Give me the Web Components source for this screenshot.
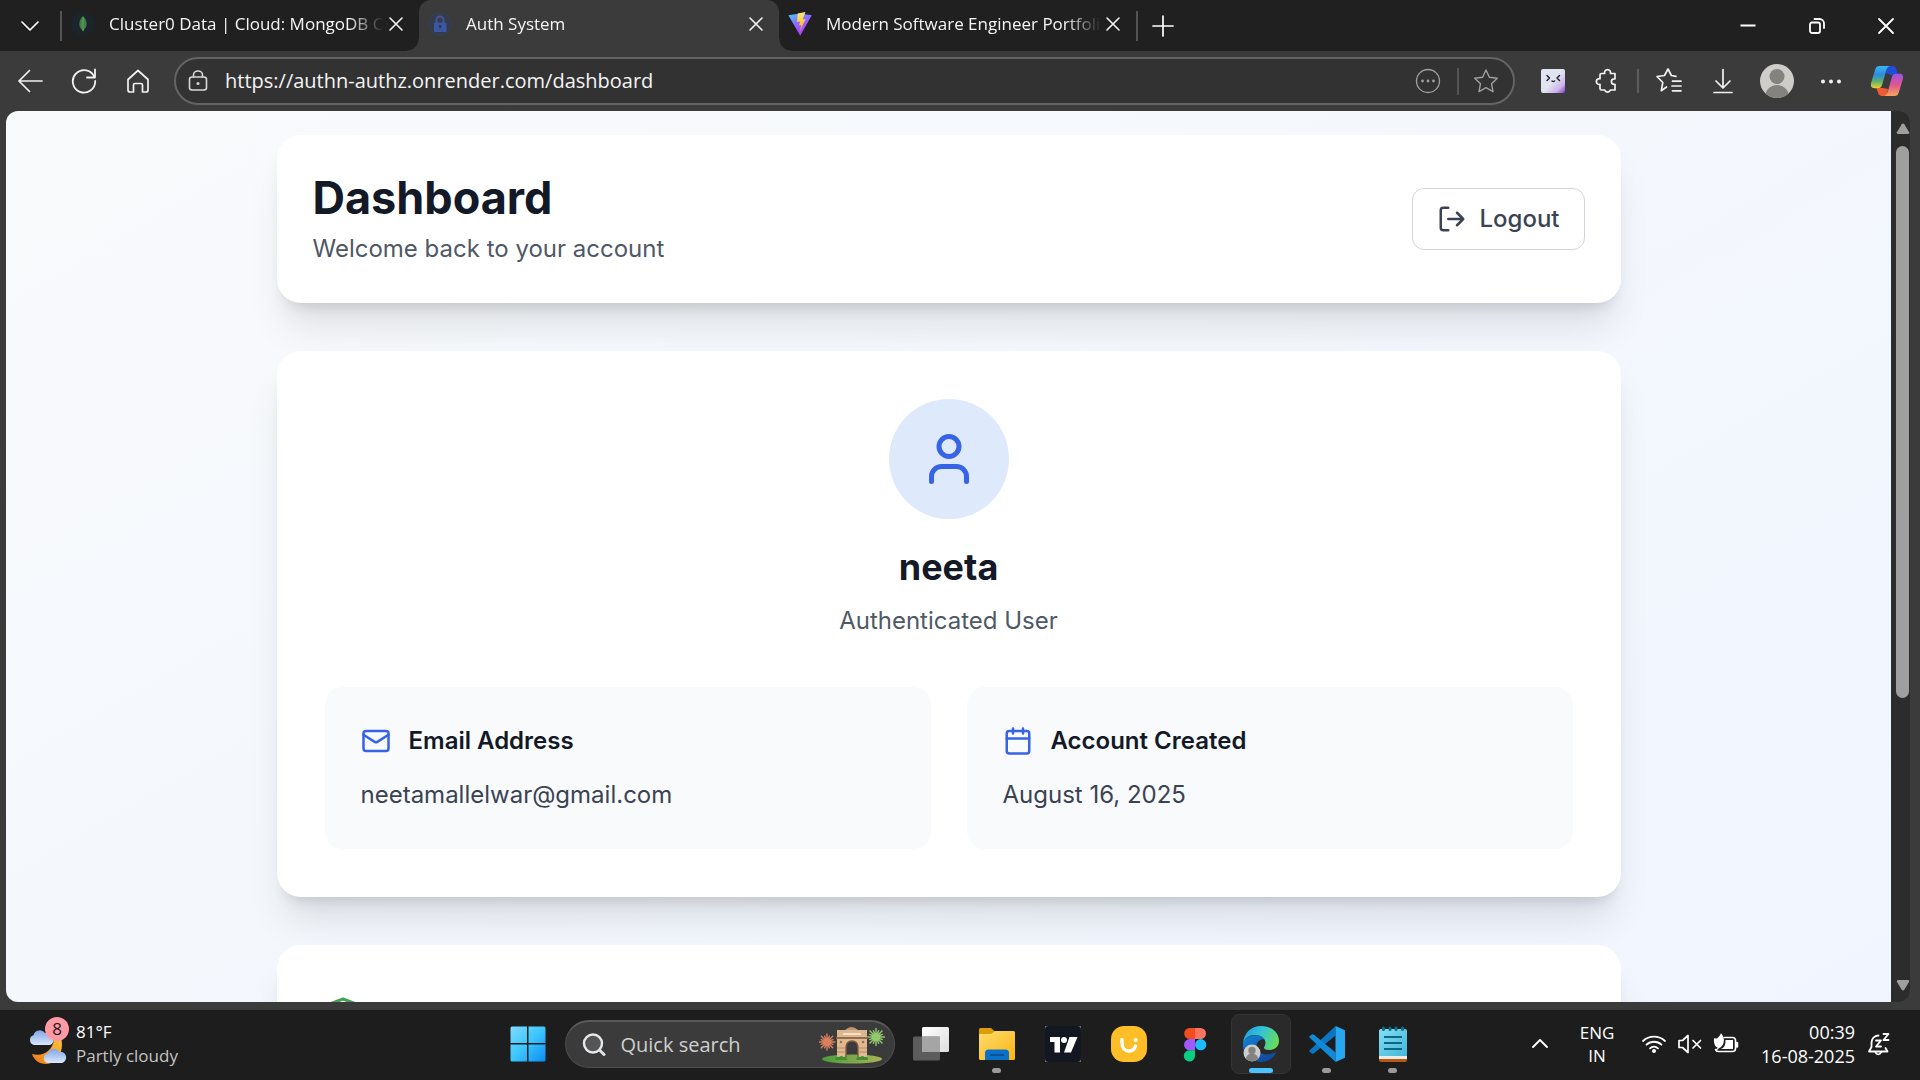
<!DOCTYPE html>
<html lang="en">
<head>
<meta charset="utf-8">
<title>Auth System</title>
<style>
html,body{margin:0;height:100%;overflow:hidden;background:#1d1d1d}
</style>
</head>
<body>
<desktop-shell></desktop-shell>
<script>
const UI_FONT = '"Open Sans","Noto Sans",sans-serif';
const define = (name, html, setup) => {
  const template = document.createElement('template');
  template.innerHTML = html;
  customElements.define(name, class extends HTMLElement {
    constructor() {
      super();
      this.attachShadow({ mode: 'open' }).append(template.content.cloneNode(true));
    }
    connectedCallback() { if (setup) setup(this, this.shadowRoot); }
  });
};

const line = 'fill="none" stroke="currentColor" stroke-linecap="round" stroke-linejoin="round"';
const burst = (cx, cy, r, color) => {
  let d = '';
  for (let i = 0; i < 16; i++) {
    const a = i * Math.PI / 8, k = i % 2 ? r * 0.8 : r;
    d += `M${cx} ${cy}L${(cx + Math.cos(a) * k).toFixed(1)} ${(cy + Math.sin(a) * k).toFixed(1)}`;
  }
  return `<path d="${d}" stroke="${color}" stroke-width="1.4" stroke-linecap="round"/><circle cx="${cx}" cy="${cy}" r="${r * 0.5}" fill="${color}" opacity=".75"/>`;
};

/* name: [width, height, markup] */
const ICONS = {
  chevron: [20, 20, `<path d="M2 6l8 8 8-8" ${line} stroke-width="1.7"/>`],
  chevronUp: [18, 18, `<path d="M2 12l7-7 7 7" ${line} stroke-width="1.9"/>`],
  leaf: [24, 24, `<circle cx="12" cy="12" r="12" fill="#1b242a"/><path d="M12 4c3 3 4 6 3.600 9-.3 2.500-1.600 4-3 5l-.6 2-.6-2c-1.400-1-2.800-2.500-3-5C8 10 9 7 12 4z" fill="#3f8145"/><path d="M12 5v14" stroke="#6aa164" stroke-width="1"/>`],
  padlock: [24, 24, `<circle cx="12" cy="12" r="11" fill="#343c4b" stroke="#33415c"/><path d="M8.500 11V8a3.500 3.500 0 0 1 7 0v3" fill="none" stroke="#3e5695" stroke-width="2"/><rect x="6" y="10.500" width="12.500" height="9.500" rx="1" fill="#3c569f"/><path d="M12.200 13v3" stroke="#28345a" stroke-width="2"/>`],
  vite: [24, 24, `<defs><linearGradient id="v" x1="0" y1="0" x2=".6" y2="1"><stop stop-color="#41d1ff"/><stop offset=".5" stop-color="#8c6bff"/><stop offset="1" stop-color="#bd34fe"/></linearGradient><linearGradient id="w" x1="0" y1="0" x2="0" y2="1"><stop stop-color="#ffea83"/><stop offset="1" stop-color="#ffa800"/></linearGradient></defs><path d="M.4 3.200L12 1.500l11.800 1.700L12.200 23.800z" fill="url(#v)"/><path d="M17.500 0L9.800 1.400 9 10l3-.6-.9 4 2.200-.5-1.600 6.900L17.500 7l-3 .5L17.500 0z" fill="url(#w)"/>`],
  close: [16, 16, `<path d="M2 2l12 12M14 2L2 14" ${line} stroke-width="1.600"/>`],
  plus: [22, 22, `<path d="M11 1v20M1 11h20" ${line} stroke-width="1.700"/>`],
  minimize: [18, 18, `<path d="M1.500 8.500h15" stroke="currentColor" stroke-width="2"/>`],
  restore: [18, 18, `<rect x="2" y="5.500" width="10" height="10.500" rx="2" ${line} stroke-width="1.800"/><path d="M6.500 2h5a4.500 4.500 0 0 1 4.500 4.500V11" ${line} stroke-width="1.800"/>`],
  closeWindow: [18, 18, `<path d="M2 2l14 14M16 2L2 16" ${line} stroke-width="1.800"/>`],
  back: [26, 26, `<path d="M25 13H2M12.500 2.500L2 13l10.500 10.500" ${line} stroke-width="1.700"/>`],
  reload: [28, 28, `<path d="M24.500 10.500A11.200 11.200 0 1 0 25.200 14M25 2.500v8h-8" ${line} stroke-width="1.800"/>`],
  home: [26, 26, `<path d="M3 11.500L13 2.500l10 9v10.500a2 2 0 0 1-2 2h-3.500v-7a1.500 1.500 0 0 0-1.500-1.500h-6a1.500 1.500 0 0 0-1.500 1.500v7H5a2 2 0 0 1-2-2z" ${line} stroke-width="1.700"/>`],
  siteLock: [20, 22, `<rect x="1.500" y="7" width="17" height="13" rx="2.500" ${line} stroke-width="1.600"/><path d="M5.500 7V5a4.500 4 0 0 1 9 0v2" ${line} stroke-width="1.600"/><circle cx="10" cy="13.500" r="1.500" fill="currentColor"/>`],
  moreCircle: [26, 26, `<circle cx="13" cy="13" r="11.500" ${line} stroke-width="1.300"/><g fill="currentColor"><circle cx="7.500" cy="13" r="1.400"/><circle cx="13" cy="13" r="1.400"/><circle cx="18.500" cy="13" r="1.400"/></g>`],
  star: [26, 26, `<path d="M13 2l3.400 7.200 7.900 1-5.800 5.500 1.500 7.900-7-3.900-7 3.900 1.500-7.900L1.700 10.200l7.900-1z" ${line} stroke-width="1.400"/>`],
  extension: [24, 24, `<defs><linearGradient id="e" x1=".3" y1=".3" x2="1" y2="1"><stop offset=".3" stop-color="#e2e4f0"/><stop offset=".7" stop-color="#cdb4ea"/><stop offset="1" stop-color="#8434d0"/></linearGradient></defs><rect width="24" height="24" rx="2" fill="url(#e)"/><path d="M6 6.500l2.500 2.500L6 11.500M18.500 6.500L16 9l2.500 2.500M11 12q1.200 1 2.600 0" ${line} style="color:#20243a" stroke-width="1.500"/>`],
  puzzle: [26, 26, `<path d="M7.500 5.500h3.200a3 3 0 1 1 5.700 0H21v5.300h-.8a2.800 2.800 0 1 0 0 5.600H21V22h-4.600a3 3 0 0 1-5.700 0H7.500a1.500 1.500 0 0 1-1.500-1.500v-4.100a2.900 2.900 0 1 1 0-5.600V7a1.500 1.500 0 0 1 1.500-1.500z" ${line} stroke-width="1.700"/>`],
  favorites: [28, 28, `<path d="M11.500 21L6.300 24.700 7.800 16.500 2 10.500l7.500-1L13 3l3.400 6.500 4.600.8M17.500 15.200h8.500M17 20h9M17.500 24.800h8.500" ${line} stroke-width="1.700" transform="translate(0 -1)"/>`],
  download: [22, 26, `<path d="M11 1.500v18M4 13l7 7 7-7M2 24.500h18" ${line} stroke-width="1.700"/>`],
  person: [34, 34, `<defs><clipPath id="p"><circle cx="17" cy="17" r="17"/></clipPath></defs><g clip-path="url(#p)"><rect width="34" height="34" fill="#cfcdc9"/><circle cx="17" cy="12.500" r="7.500" fill="#858380"/><circle cx="17" cy="33" r="12" fill="#858380"/></g>`],
  dots: [22, 22, `<g fill="currentColor"><circle cx="3" cy="11.500" r="2"/><circle cx="11" cy="11.500" r="2"/><circle cx="19" cy="11.500" r="2"/></g>`],
  copilot: [34, 32, `<defs><linearGradient id="c1" x1="0" y1="0" x2="0" y2="1"><stop stop-color="#35b8f1"/><stop offset=".4" stop-color="#2f8be0"/><stop offset=".7" stop-color="#5fb36a"/><stop offset="1" stop-color="#f2cf2a"/></linearGradient><linearGradient id="c2" x1="0" y1="0" x2="0" y2="1"><stop stop-color="#9a52e6"/><stop offset=".5" stop-color="#e0578f"/><stop offset="1" stop-color="#f6a45a"/></linearGradient></defs><path d="M17 1h5.500a4 4 0 0 1 3.800 2.800L28 10h-7l-5-2z" fill="#1f4fd6"/><path d="M17 31h-5a4 4 0 0 1-3.800-2.800L6.500 23H13l5 1z" fill="#ee5a32"/><path d="M9.500 1h10.200c-2.200.6-2.900 2.400-3.500 4.500l-4 14c-.8 2.800-2 3.700-4.500 3.700H4.500C1 23.200.4 20.500 1.200 17.500L5.300 4.300C6 2.200 7.200 1 9.500 1z" fill="url(#c1)"/><path d="M24.500 31H14.300c2.200-.6 2.900-2.400 3.500-4.500l4-14c.8-2.800 2-3.700 4.500-3.700h3.200c3.500 0 4.100 2.700 3.300 5.700l-4.100 13.200C28 29.800 26.800 31 24.500 31z" fill="url(#c2)"/>`],
  logout: [24, 24, `<path d="M9 21H5a2 2 0 0 1-2-2V5a2 2 0 0 1 2-2h4M16 17l5-5-5-5M21 12H9" ${line} stroke-width="2"/>`],
  user: [24, 24, `<path d="M19 21v-2a4 4 0 0 0-4-4H9a4 4 0 0 0-4 4v2" ${line} stroke-width="2"/><circle cx="12" cy="7" r="4" ${line} stroke-width="2"/>`],
  mail: [24, 24, `<rect x="2" y="4" width="20" height="16" rx="2" ${line} stroke-width="2"/><path d="M22 7l-8.970 5.700a1.940 1.940 0 0 1-2.060 0L2 7" ${line} stroke-width="2"/>`],
  calendar: [24, 24, `<path d="M8 2v4M16 2v4M3 10h18" ${line} stroke-width="2"/><rect x="3" y="4" width="18" height="18" rx="2" ${line} stroke-width="2"/>`],
  shield: [24, 24, `<path d="M12 22s8-4 8-10V5l-8-3-8 3v7c0 6 8 10 8 10z" ${line} stroke-width="2"/>`],
  weather: [42, 42, `<defs><linearGradient id="k" x1="0" y1="0" x2="0" y2="1"><stop stop-color="#7fa6ea"/><stop offset="1" stop-color="#dce8fb"/></linearGradient><linearGradient id="m" x1="1" y1="0" x2="0" y2="1"><stop stop-color="#f9c53c"/><stop offset="1" stop-color="#ee7a16"/></linearGradient></defs><path d="M33 15c4 14-5 26-15 26-7 0-12-4-14-10 11 3 20-3 22-14z" fill="url(#m)"/><path d="M6 22a5 5 0 0 1-.5-9.700A6.500 6.500 0 0 1 17 10a6 6 0 0 1 5 12z" fill="url(#k)"/><path d="M20 40a4.800 4.800 0 0 1 0-9.500 6 6 0 0 1 11-1.500 5.600 5.600 0 0 1 3 11z" fill="url(#k)"/>`],
  windows: [36, 36, `<defs><linearGradient id="s" x1="0" y1="0" x2="1" y2="1"><stop stop-color="#7fdcff"/><stop offset=".5" stop-color="#3cc5fc"/><stop offset="1" stop-color="#0a8cf5"/></linearGradient></defs><path d="M2 .5h15v16.500H.5V2A1.500 1.500 0 0 1 2 .5zM18.500.5H34A1.500 1.500 0 0 1 35.500 2v15h-17zM.5 18.500H17v17H2A1.500 1.500 0 0 1 .5 34zM18.500 18.500h17V34a1.500 1.500 0 0 1-1.500 1.500H18.500z" fill="url(#s)"/>`],
  search: [24, 24, `<circle cx="11" cy="10.500" r="9" fill="#555" stroke="#e6e9ec" stroke-width="2.400"/><path d="M17.500 17l4.500 4.500" stroke="#dfe3e6" stroke-width="3" stroke-linecap="round"/>`],
  gate: [66, 38, `<defs><linearGradient id="g" x1="0" y1="0" x2="1" y2="0"><stop stop-color="#4d9a3e"/><stop offset="1" stop-color="#aab556"/></linearGradient></defs><ellipse cx="33" cy="33" rx="30" ry="4.500" fill="url(#g)"/>${burst(8, 16, 8, '#d9805f')}${burst(57, 11, 8.500, '#94c96f')}<path d="M26 4q6.500-6 13 0z" fill="#c3946d"/><path d="M18 4h30v8H18z" fill="#dcb690"/><path d="M18 12h30v19h-9V21q-.5-6-6-6t-6 6v10h-9z" fill="#e0b990"/><path d="M17 12h32" stroke="#8a6546" stroke-width="1.800"/><path d="M24 8h18" stroke="#f5e1c6" stroke-width="2"/><path d="M27 31V21q.5-6 6-6t6 6v10" fill="none" stroke="#7e5a40" stroke-width="1.400"/><path d="M18 22h9M39 22h9M18 26h9M39 26h9" stroke="#b98a62" stroke-width="1"/><circle cx="22" cy="16" r="1.300" fill="#9a7150"/><circle cx="44" cy="16" r="1.300" fill="#9a7150"/><path d="M16 34q1-4 4-3 3-2 4 0 4-1 4 3zM37 34q1-4 4-3 3-2 4 0 4-1 4 3z" fill="#3f8f35"/>`],
  taskView: [36, 34, `<defs><linearGradient id="t" x1="0" y1="0" x2="1" y2="1"><stop stop-color="#fff"/><stop offset="1" stop-color="#dedede"/></linearGradient></defs><rect x="9" width="27" height="25" rx="1.500" fill="url(#t)"/><rect y="9.500" width="27" height="24" rx="1.500" fill="#6d6d6d" opacity=".8"/><rect x="9" y="9.500" width="18" height="15.500" fill="#a5a5a5"/>`],
  explorer: [36, 34, `<defs><linearGradient id="x" x1="0" y1="0" x2="1" y2="1"><stop stop-color="#ffdc6e"/><stop offset="1" stop-color="#f9b613"/></linearGradient></defs><path d="M0 2.500A1.500 1.500 0 0 1 1.500 1H12l4 3.500V12H0z" fill="#dd9f08"/><path d="M0 7h12l4-3h18.500A1.500 1.500 0 0 1 36 5.500v26a1.500 1.500 0 0 1-1.500 1.500h-33A1.500 1.500 0 0 1 0 31.500z" fill="url(#x)"/><path d="M6 33v-7a3.500 3.500 0 0 1 3.500-3.500h17A3.500 3.500 0 0 1 30 26v7z" fill="#0a70c8"/><path d="M11 28h14" stroke="#0b4c8c" stroke-width="1.600"/>`],
  trading: [36, 36, `<rect width="36" height="36" fill="#70737a"/><rect width="36" height="36" rx="4" fill="#131722"/><path d="M5 11h10v15.500H9.500V16H5z" fill="#fff"/><circle cx="19" cy="14" r="3" fill="#fff"/><path d="M24.500 11h8l-6.500 15.500h-7z" fill="#fff"/>`],
  smile: [36, 36, `<rect width="36" height="36" rx="13" fill="#fdbe28"/><path d="M11 13.500v3.500c0 5 3 8 7 8 3 0 5.500-1.800 6.500-5" ${line} style="color:#fff" stroke-width="3.400"/><circle cx="24.700" cy="14" r="2" fill="#fff"/>`],
  figma: [24, 36, `<path d="M6.700 2H12v11H6.700a5.500 5.500 0 0 1 0-11z" fill="#f24e1e"/><path d="M12 2h5.500a5.500 5.500 0 0 1 0 11H12z" fill="#ff7262"/><path d="M6.700 13H12v11.300H6.700a5.600 5.600 0 0 1 0-11.300z" fill="#a259ff"/><circle cx="17.700" cy="18.700" r="5.600" fill="#1abcfe"/><path d="M6.700 24.300H12V30a5.600 5.600 0 1 1-5.300-5.700z" fill="#0acf83"/>`],
  edge: [36, 36, `<defs><linearGradient id="a" x1="0" y1=".2" x2="1" y2=".5"><stop stop-color="#1fa2de"/><stop offset=".5" stop-color="#35c3d4"/><stop offset="1" stop-color="#66dd57"/></linearGradient><linearGradient id="b" x1="0" y1="0" x2=".7" y2="1"><stop stop-color="#1285d8"/><stop offset="1" stop-color="#11479b"/></linearGradient></defs><path d="M0 17C3 9 17 6 21.500 13.500c-4-1-8 2-8 7C13.500 28 23 31 33.500 26 30 33 24.500 36 18 36 7 36-1 27 0 17z" fill="url(#b)"/><path d="M0 17C1 7 8 0 18 0c11 0 18 7 18 15 0 6-4.500 9-9.500 9-4 0-6.500-1-5-3.500 3-5-1-11.500-9-11.500C6 9 2 12 0 17z" fill="url(#a)"/><circle cx="9" cy="27" r="8.500" fill="#cfcdc9"/><circle cx="9" cy="24.500" r="3.700" fill="#858380"/><path d="M3 32.800a6 5.500 0 0 1 12 0q-6 5-12 0z" fill="#858380"/>`],
  code: [36, 36, `<path d="M1.500 23.500L26.500 0v9.500L5 27.300q-1.500 1-2.500 0L.7 26q-1-1.300.8-2.500z" fill="#0b76c2"/><path d="M1.500 12.500L26.500 36v-9.500L5 8.700q-1.500-1-2.500 0L.7 10q-1 1.300.8 2.500z" fill="#1289d6"/><path d="M26.500 0L36 4.300v27.400L26.500 36z" fill="#27a7f2"/>`],
  notepad: [28, 36, `<defs><linearGradient id="n" x1="0" y1="0" x2="1" y2="1"><stop stop-color="#86def4"/><stop offset="1" stop-color="#41b7d8"/></linearGradient></defs><path d="M0 28h28v6a2 2 0 0 1-2 2H2a2 2 0 0 1-2-2z" fill="#b8590f"/><path d="M0 28h28v5H0z" fill="#ecebe9"/><path d="M0 5a2 2 0 0 1 2-2h24a2 2 0 0 1 2 2v25H0z" fill="url(#n)"/><path d="M4.500 2v1.500M11 2v1.500M17 2v1.500M23.500 2v1.500" stroke="#0b6f8e" stroke-width="3" stroke-linecap="round"/><path d="M5 11h18M5 17h18M5 23h18" stroke="#0c6684" stroke-width="1.800"/>`],
  wifi: [26, 22, `<path d="M2 8a16 16 0 0 1 22 0M5.500 11.700a11 11 0 0 1 15 0M9 15.300a6 6 0 0 1 8 0" ${line} stroke-width="1.800"/><circle cx="13" cy="18" r="2" fill="currentColor"/>`],
  muted: [26, 22, `<path d="M2 7.500h3.500L11 2.500v17l-5.500-5H2z" ${line} stroke-width="1.700"/><path d="M16 7.500l7.500 7.500M23.500 7.500L16 15" ${line} stroke-width="1.700"/>`],
  battery: [26, 22, `<path d="M11 4.500h8.500a3 3 0 0 1 3 3v8a3 3 0 0 1-3 3H5.500a3 3 0 0 1-3-2" ${line} stroke-width="1.600"/><path d="M12.500 7h7.500v9H8q5-2 4.500-9z" fill="currentColor"/><path d="M24 10v3.500" ${line} stroke-width="2.500"/><path d="M8 .3c3.500 3.500 4.500 11-1 14.400C3 15.300.5 12.500 1 5c1.500.8 2.500.8 3.500 0C6 4 7 2.300 8 .3z" fill="currentColor"/><path d="M8 8q-.5 6-5 9" ${line} stroke-width="1.300"/>`],
  bell: [26, 26, `<path d="M12.500 4.500C8 4.500 5.500 8 5.500 12v4L3 20.500h18.500L19.500 17M9.500 21.500a3 3 0 0 0 5.500 0" ${line} stroke-width="1.800"/><path d="M10 9.500h5L10 15.500h5M17.500 3h5L17.500 9h5" ${line} stroke-width="1.800"/>`],
  arrowUp: [14, 14, `<path d="M7 1.500q.8 0 1.300.8l4.800 8q.5 1.700-1 1.700H1.900q-1.500 0-1-1.700l4.800-8Q6.200 1.500 7 1.500z" fill="currentColor"/>`],
  arrowDown: [14, 14, `<path d="M7 12.500q.8 0 1.300-.8l4.800-8q.5-1.700-1-1.700H1.900q-1.500 0-1 1.700l4.800 8q.5.8 1.300.8z" fill="currentColor"/>`]
};

define('line-icon', `<style>:host{display:block;flex:none;line-height:0}svg{display:block}</style>`, (host, root) => {
  if (root.querySelector('svg')) return;
  const [w, h, body] = ICONS[host.getAttribute('name')];
  const size = host.getAttribute('size');
  root.innerHTML += `<svg width="${size || w}" height="${size || h}" viewBox="0 0 ${w} ${h}" aria-hidden="true">${body}</svg>`;
});

const BUTTON_RESET = `button{font:inherit;color:inherit;background:none;border:0;padding:0;margin:0;display:flex;align-items:center;justify-content:center}`;

define('icon-button', `<style>:host{display:flex;flex:none;width:54px}${BUTTON_RESET}button{width:100%;height:48px}</style><button type="button"><slot></slot></button>`,
  (host, root) => root.querySelector('button').setAttribute('aria-label', host.getAttribute('label')));

define('browser-tab', `<style>
:host{display:flex;align-items:center;width:360px;box-sizing:border-box;padding:0 11px 4px 9px;height:51px;color:#f5f5f5;position:relative}
:host([active]){background:#3b3b3b;border-radius:12px 12px 0 0}
:host([active])::before,:host([active])::after{content:"";position:absolute;bottom:0;width:12px;height:12px}
:host([active])::before{right:100%;background:radial-gradient(circle at 0 0,transparent 11px,#3b3b3b 12px)}
:host([active])::after{left:100%;background:radial-gradient(circle at 100% 0,transparent 11px,#3b3b3b 12px)}
${BUTTON_RESET}
.tab{flex:1;min-width:0;justify-content:flex-start;gap:14px;height:36px}
.text{flex:1;min-width:0;overflow:hidden;white-space:nowrap;text-align:left;-webkit-mask-image:linear-gradient(90deg,#000 calc(100% - 36px),transparent);mask-image:linear-gradient(90deg,#000 calc(100% - 36px),transparent)}
.close{width:24px;height:24px}
</style><button type="button" class="tab"><slot name="icon"></slot><span class="text"><slot></slot></span></button><button type="button" class="close" aria-label="Close tab"><line-icon name="close"></line-icon></button>`);

define('tab-strip', `<style>
:host{display:flex;height:51px;background:#202020;color:#fff;font:17px/24px ${UI_FONT};align-items:center}
.rule{width:2px;height:30px;background:#545454;flex:none}
.grow{flex:1}
.window{width:69px}
.menu{width:60px}.new{width:50px}
.inactive{width:357px}
</style>
<icon-button class="menu" label="Tab actions"><line-icon name="chevron"></line-icon></icon-button>
<span class="rule"></span>
<browser-tab class="inactive"><line-icon slot="icon" name="leaf"></line-icon>Cluster0 Data | Cloud: MongoDB Cloud</browser-tab>
<browser-tab active><line-icon slot="icon" name="padlock"></line-icon>Auth System</browser-tab>
<browser-tab class="inactive"><line-icon slot="icon" name="vite"></line-icon>Modern Software Engineer Portfolio</browser-tab>
<span class="rule"></span>
<icon-button class="new" label="New tab"><line-icon name="plus"></line-icon></icon-button>
<span class="grow"></span>
<icon-button class="window" label="Minimize"><line-icon name="minimize"></line-icon></icon-button>
<icon-button class="window" label="Restore"><line-icon name="restore"></line-icon></icon-button>
<icon-button class="window" label="Close"><line-icon name="closeWindow"></line-icon></icon-button>`);

define('address-bar', `<style>
:host{display:flex;align-items:center;flex:1;height:48px;box-sizing:border-box;border:2px solid #646464;border-radius:24px;background:#323232;padding:0 0 0 12px;color:#a0a0a0}
label{display:flex;align-items:center;flex:1;gap:17px;color:#d8d8d8}
input{flex:1;min-width:0;border:0;padding:0;margin:0;background:none;outline:0;color:#f4f4f4;font:20px/28px ${UI_FONT}}
.rule{width:2px;height:27px;background:#555}
.more{width:58px}
</style>
<label><line-icon name="siteLock"></line-icon><input type="text" aria-label="Address" value="https://authn-authz.onrender.com/dashboard"></label>
<icon-button class="more" label="More actions"><line-icon name="moreCircle"></line-icon></icon-button>
<span class="rule"></span>
<icon-button label="Add to favorites"><line-icon name="star"></line-icon></icon-button>`);

define('tool-bar', `<style>
:host{display:flex;align-items:center;height:60px;padding:0 6px 0 3px;color:#f2f2f2}
address-bar{margin:0 11px 0 9px}
.rule{width:2px;height:24px;margin:0 3px;background:#5c5c5c}
.side{margin-left:2px}
</style>
<icon-button label="Back"><line-icon name="back"></line-icon></icon-button>
<icon-button label="Refresh"><line-icon name="reload"></line-icon></icon-button>
<icon-button label="Home"><line-icon name="home"></line-icon></icon-button>
<address-bar></address-bar>
<icon-button label="Extension"><line-icon name="extension"></line-icon></icon-button>
<icon-button label="Extensions"><line-icon name="puzzle"></line-icon></icon-button>
<span class="rule"></span>
<icon-button label="Favorites"><line-icon name="favorites"></line-icon></icon-button>
<icon-button label="Downloads"><line-icon name="download"></line-icon></icon-button>
<icon-button label="Profile"><line-icon name="person"></line-icon></icon-button>
<icon-button label="Settings"><line-icon name="dots"></line-icon></icon-button>
<icon-button class="side" label="Copilot"><line-icon name="copilot"></line-icon></icon-button>`);

define('page-card', `<style>
:host{display:block;background:#fff;border-radius:24px;padding:48px;box-shadow:0 30px 38px -8px rgba(0,0,0,.1),0 12px 15px -9px rgba(0,0,0,.14)}
:host([compact]){padding:36px}
</style><slot></slot>`);

define('info-tile', `<style>
:host{display:flex;flex-direction:column;gap:18px;flex:1;background:#f9fafc;border-radius:18px;padding:36px}
.head{display:flex;align-items:center;gap:18px;color:#3763e6}
h3{margin:0;font-size:24px;line-height:36px;font-weight:600;color:#131927}
p{margin:0;color:#3a4353}
</style><div class="head"><slot name="icon"></slot><h3><slot name="title"></slot></h3></div><p><slot></slot></p>`);

define('dashboard-page', `<style>
:host{display:block;flex:1;min-width:0;overflow:hidden;padding:24px;background:linear-gradient(150deg,#f9fafc,#f4f8fd 45%,#f0f5ff);border-radius:12px 0 0 12px;font:24px/36px Inter,sans-serif;color:#131927;box-sizing:border-box}
main{display:flex;flex-direction:column;gap:48px;max-width:1344px;margin:0 auto}
header{display:flex;align-items:center;justify-content:space-between}
h1,h2,p{margin:0}
h1{font-size:45px;line-height:54px;font-weight:700;margin-bottom:6px}
.muted{color:#4f5966}
${BUTTON_RESET}
.logout{gap:12px;padding:12px 24px;border:1px solid #d2d5dc;border-radius:12px;font-weight:500;color:#3a4353}
.profile{display:flex;flex-direction:column;align-items:center;margin-bottom:48px}
.avatar{display:grid;place-items:center;width:120px;height:120px;border-radius:50%;background:#dee9fb;color:#3763e6;margin-bottom:24px}
h2{font-size:36px;line-height:48px;font-weight:700;margin-bottom:12px}
.tiles{display:flex;gap:36px}
.secure{display:flex;align-items:center;height:42px;color:#45a055}
</style>
<main>
<page-card compact><header><div><h1>Dashboard</h1><p class="muted">Welcome back to your account</p></div><button type="button" class="logout"><line-icon name="logout" size="30"></line-icon>Logout</button></header></page-card>
<page-card>
<div class="profile"><div class="avatar"><line-icon name="user" size="60"></line-icon></div><h2>neeta</h2><p class="muted">Authenticated User</p></div>
<div class="tiles">
<info-tile><line-icon slot="icon" name="mail" size="30"></line-icon><span slot="title">Email Address</span>neetamallelwar@gmail.com</info-tile>
<info-tile><line-icon slot="icon" name="calendar" size="30"></line-icon><span slot="title">Account Created</span>August 16, 2025</info-tile>
</div>
</page-card>
<page-card><div class="secure"><line-icon name="shield" size="36"></line-icon></div></page-card>
</main>`);

define('scroll-rail', `<style>
:host{display:flex;flex-direction:column;align-items:center;width:19px;padding:11px 0 10px 4px;box-sizing:border-box;background:#2c2c2c;border-radius:0 12px 12px 0;color:#9f9f9f}
.track{flex:1;width:13px;margin:10px 0 8px}
.thumb{height:67%;border-radius:7px;background:#9f9f9f}
</style><line-icon name="arrowUp"></line-icon><div class="track"><div class="thumb"></div></div><line-icon name="arrowDown"></line-icon>`);

define('browser-window', `<style>
:host{display:flex;flex-direction:column;flex:1;min-height:0;background:#3b3b3b}
.view{display:flex;flex:1;min-height:0;padding:0 10px 8px 6px}
</style><tab-strip></tab-strip><tool-bar></tool-bar><div class="view"><dashboard-page></dashboard-page><scroll-rail></scroll-rail></div>`);

define('task-app', `<style>
:host{display:flex;width:66px;height:68px;justify-content:center;position:relative}
${BUTTON_RESET}
button{width:60px;height:60px;margin:4px 0;box-sizing:border-box;border-radius:8px}
:host([active]) button{background:#2a2a2a;border:1px solid #343434}
:host([running])::after,:host([active])::after{content:"";position:absolute;bottom:5px;width:9px;height:5px;border-radius:3px;background:#9a9a9a}
:host([active])::after{width:24px;background:#4cc2ff}
</style><button type="button"><slot></slot></button>`,
  (host, root) => root.querySelector('button').setAttribute('aria-label', host.getAttribute('label')));

define('task-search', `<style>
:host{display:block;width:330px;margin:0 3px 0 4px}
label{display:flex;align-items:center;gap:15px;height:48px;box-sizing:border-box;padding:0 9px 0 16px;border:1px solid #4c4c4c;border-top:2px solid #5a5a5a;border-radius:24px;background:#3b3b3b}
input{flex:1;min-width:0;border:0;padding:0;margin:0;background:none;outline:0;color:#cfcfcf;font:20px/28px ${UI_FONT}}
input::placeholder{color:#cfcfcf;opacity:1}
</style><label><line-icon name="search"></line-icon><input type="text" aria-label="Search" placeholder="Quick search"><line-icon name="gate"></line-icon></label>`);

define('task-bar', `<style>
:host{display:grid;grid-template-columns:1fr auto 1fr;align-items:center;height:70px;padding-bottom:2px;box-sizing:border-box;background:#1d1d1d;color:#fff;font:17px/24px ${UI_FONT}}
${BUTTON_RESET}
.weather{justify-self:start;gap:6px;padding-left:28px;text-align:left}
.weather span{display:block}
.dim{color:#c4c4c4}
.icon{position:relative}
.badge{position:absolute;left:17px;top:-6px;width:24px;height:24px;border-radius:50%;background:#ff99a4;color:#1a1a1a;font-size:17px;text-align:center}
.apps{display:flex;align-items:center}
.tray{justify-self:end;display:flex;align-items:center;padding-right:28px}
.lang{width:78px;text-align:center;flex-direction:column;line-height:23px}
.status{gap:10px;padding:0 22px 0 5px}
.clock{gap:11px}
.time{text-align:right;font-size:18px}
.time span{display:block}
.up{width:36px;height:48px}
</style>
<button type="button" class="weather"><span class="icon"><line-icon name="weather"></line-icon><span class="badge">8</span></span><span><span>81°F</span><span class="dim">Partly cloudy</span></span></button>
<div class="apps">
<task-app label="Start"><line-icon name="windows"></line-icon></task-app>
<task-search></task-search>
<task-app label="Task view"><line-icon name="taskView"></line-icon></task-app>
<task-app running label="File Explorer"><line-icon name="explorer"></line-icon></task-app>
<task-app label="TradingView"><line-icon name="trading"></line-icon></task-app>
<task-app label="Assistant"><line-icon name="smile"></line-icon></task-app>
<task-app label="Figma"><line-icon name="figma"></line-icon></task-app>
<task-app active label="Edge"><line-icon name="edge"></line-icon></task-app>
<task-app running label="Code"><line-icon name="code"></line-icon></task-app>
<task-app running label="Notepad"><line-icon name="notepad"></line-icon></task-app>
</div>
<div class="tray">
<button type="button" class="up" aria-label="Hidden icons"><line-icon name="chevronUp"></line-icon></button>
<button type="button" class="lang"><span>ENG</span><span>IN</span></button>
<button type="button" class="status" aria-label="Network, volume and battery"><line-icon name="wifi"></line-icon><line-icon name="muted"></line-icon><line-icon name="battery"></line-icon></button>
<button type="button" class="clock"><span class="time"><span>00:39</span><span>16-08-2025</span></span><line-icon name="bell"></line-icon></button>
</div>`);

define('desktop-shell', `<style>:host{display:flex;flex-direction:column;height:100vh}</style><browser-window></browser-window><task-bar></task-bar>`);
</script>
</body>
</html>
